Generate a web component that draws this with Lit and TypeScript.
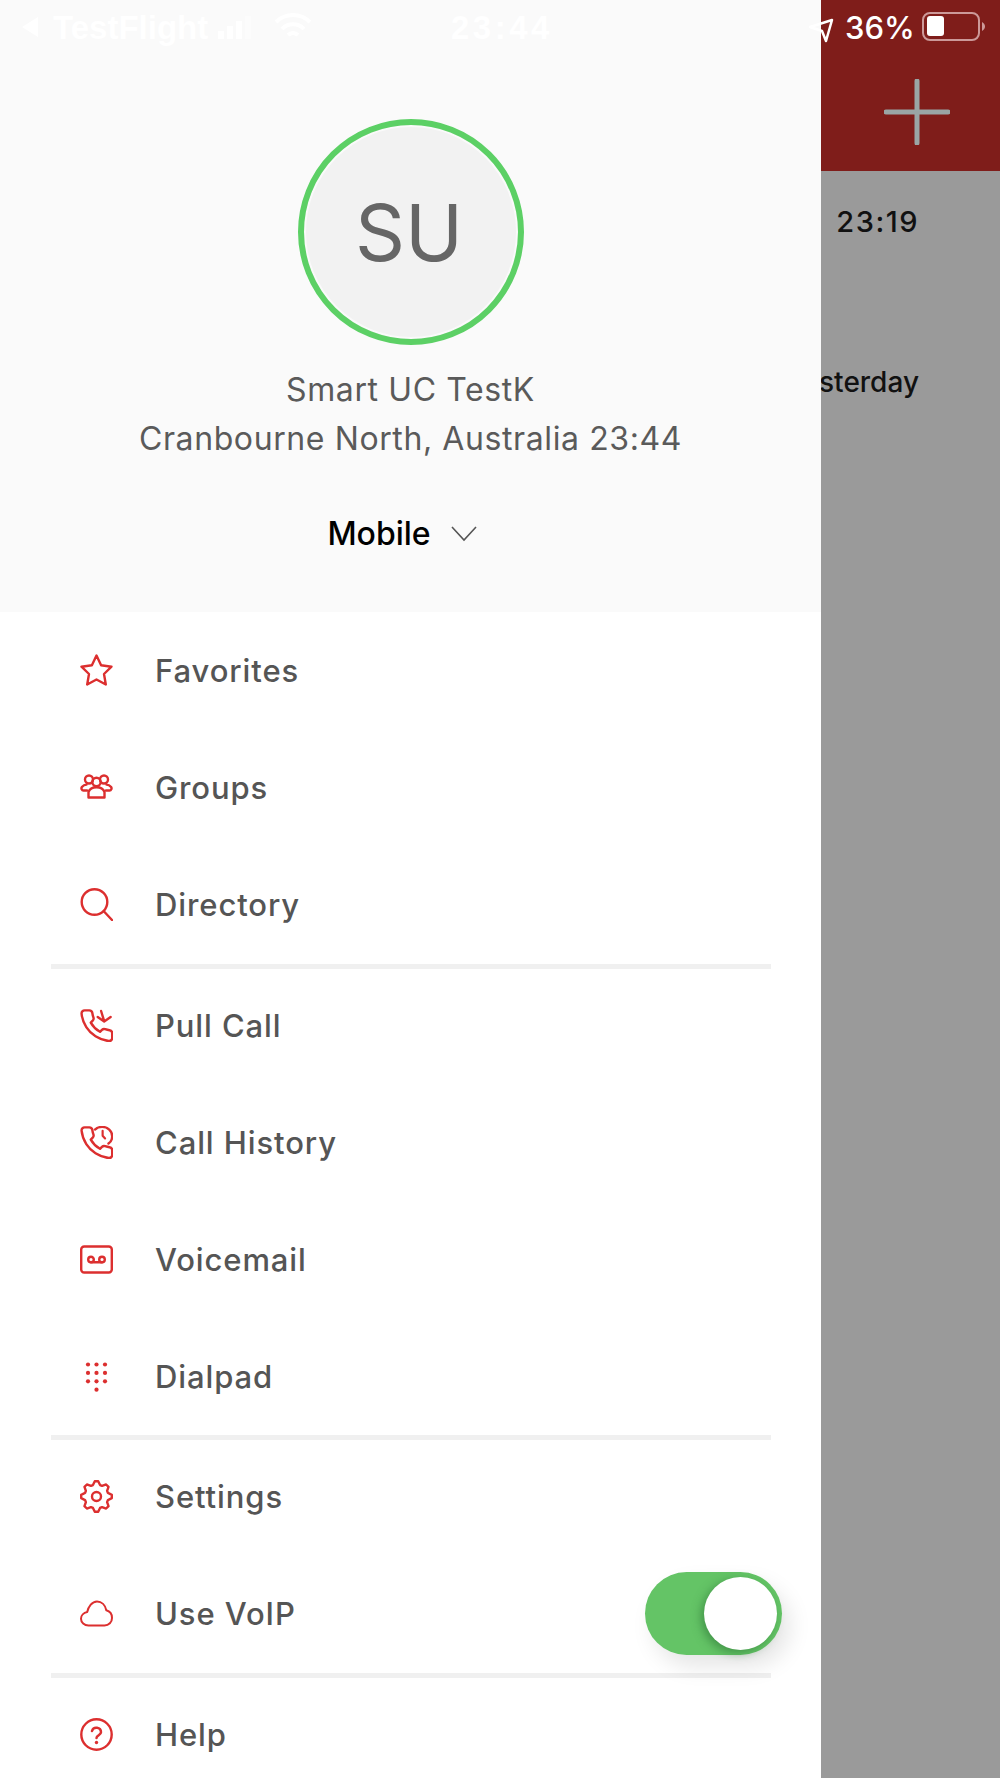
import { LitElement, html, css, svg } from "lit";
import { customElement } from "lit/decorators.js";

const PHONE = "M22 16.92v3a2 2 0 0 1-2.18 2 19.79 19.79 0 0 1-8.63-3.07 19.5 19.5 0 0 1-6-6 19.79 19.79 0 0 1-3.07-8.67A2 2 0 0 1 4.11 2h3a2 2 0 0 1 2 1.72 12.84 12.84 0 0 0 .7 2.81 2 2 0 0 1-.45 2.11L8.09 9.91a16 16 0 0 0 6 6l1.27-1.27a2 2 0 0 1 2.11-.45 12.84 12.84 0 0 0 2.81.7A2 2 0 0 1 22 16.92z";

function gearPath(): string {
  const pts: string[] = [];
  const cx = 16.5, cy = 16.5;
  for (let i = 0; i < 8; i++) {
    const a = (i * Math.PI) / 4 - Math.PI / 2;
    const seq: [number, number][] = [[-0.3, 12], [-0.11, 15.4], [0.11, 15.4], [0.3, 12]];
    for (const [d, r] of seq) {
      pts.push(`${(cx + r * Math.cos(a + d)).toFixed(2)} ${(cy + r * Math.sin(a + d)).toFixed(2)}`);
    }
  }
  return "M" + pts.join("L") + "Z";
}

const icons: Record<string, unknown> = {
  star: svg`<path d="M16.5 1.500l4.600 9.700 10.400 1.500-7.500 7.300 1.800 10.500-9.300-5-9.300 5 1.800-10.500-7.500-7.300 10.400-1.500z"/>`,
  groups: svg`<circle cx="9" cy="8.500" r="4"/><circle cx="24" cy="8.500" r="4"/><circle cx="16.500" cy="11" r="4.200"/>
    <path d="M7 19.500H3.500a2.200 2.200 0 0 1-1.600-3.500C3.200 14.400 5 13.600 6.500 13.600M26 19.500h3.500a2.200 2.200 0 0 0 1.600-3.500c-1.300-1.600-3.100-2.400-4.600-2.400"/>
    <path d="M8.500 26.500h16v-5.500c-1-3-4-4.800-8-4.800s-7 1.800-8 4.800z"/>`,
  search: svg`<circle cx="14.500" cy="14" r="12.800"/><path d="M23.800 23.200l8.200 8.800"/>`,
  pull: svg`<g transform="translate(-1.700 -1.700) scale(1.540)"><path stroke-width="1.560" d="${PHONE}"/><path stroke-width="1.560" d="M14.800 2.400l2 6.600M12.600 6.300l4.200 2.900 4.200-2.900"/></g>`,
  history: svg`<g transform="translate(-1.700 -1.700) scale(1.540)"><path stroke-width="1.560" d="${PHONE}"/><path stroke-width="1.560" d="M10.800 3.400C12 2.300 13.800 1.700 15.500 1.700c3.600 0 6.500 2.700 6.500 6 0 1.900-.9 3.700-2.400 4.800"/><path stroke-width="1.400" d="M15.800 4.200v3.200l1.600 1.800"/></g>`,
  voicemail: svg`<rect x="1.200" y="3.500" width="30.600" height="26" rx="3"/><circle cx="11" cy="16.500" r="2.800"/><circle cx="22" cy="16.500" r="2.800"/><path d="M11 19.300h11"/>`,
  dialpad: svg`<g fill="currentColor" stroke="none">
    ${[0, 1, 2].flatMap((r) => [8, 16.5, 25].map((x) => svg`<circle cx="${x}" cy="${4.500 + r * 8.400}" r="2.100"/>`))}
    <circle cx="16.500" cy="29.700" r="2.100"/></g>`,
  gear: svg`<path d="${gearPath()}"/><circle cx="16.500" cy="16.500" r="4.500"/>`,
  cloud: svg`<path stroke-width="2" d="M8.500 28.500C4.300 28.500 1 25.600 1 21.800c0-3.500 2.700-6.200 6.200-6.800C8.400 9.500 12.200 4.500 17 4.500c4.600 0 8.300 3.400 9.300 8.800 3.400.9 5.700 4 5.700 7.600 0 4.300-3.200 7.600-7.500 7.600z"/>`,
  help: svg`<circle cx="16.500" cy="16.500" r="15.200"/><path stroke-width="2.500" d="M12 13a4.600 4.600 0 0 1 9 1.300c0 2.900-4.500 3-4.500 5.700"/><circle cx="16.500" cy="24.500" r="1.700" fill="currentColor" stroke="none"/>`,
};

type Row = { icon: string; label: string; toggle?: boolean };
const groups: Row[][] = [
  [{ icon: "star", label: "Favorites" }, { icon: "groups", label: "Groups" }, { icon: "search", label: "Directory" }],
  [{ icon: "pull", label: "Pull Call" }, { icon: "history", label: "Call History" }, { icon: "voicemail", label: "Voicemail" }, { icon: "dialpad", label: "Dialpad" }],
  [{ icon: "gear", label: "Settings" }, { icon: "cloud", label: "Use VoIP", toggle: true }],
  [{ icon: "help", label: "Help" }],
];

@customElement("app-root")
export class AppRoot extends LitElement {
  static styles = css`
    :host {
      display: block;
      position: relative;
      width: 1000px;
      height: 1778px;
      overflow: hidden;
      background: #9a9a9a;
      font-family: Inter, "Liberation Sans", sans-serif;
    }
    .back-head {
      height: 171px;
      background: #7f1d1a;
      display: flex;
      justify-content: flex-end;
      align-items: flex-start;
      padding: 79px 50px 0 0;
      box-sizing: border-box;
    }
    .back-row {
      display: flex;
      justify-content: flex-end;
      padding-right: 81px;
      font-size: 29px;
      font-weight: 500;
      color: #111;
      line-height: 32px;
      letter-spacing: 1.500px;
    }
    .r1 { margin-top: 35px; }
    .r2 { margin-top: 128px; letter-spacing: 0; font-size: 28px; }
    .drawer {
      position: absolute;
      left: 0;
      top: 0;
      width: 821px;
      height: 1778px;
      background: #fff;
      overflow: hidden;
    }
    .profile {
      height: 612px;
      box-sizing: border-box;
      background: #fafafa;
      padding-top: 119px;
      display: flex;
      flex-direction: column;
      align-items: center;
    }
    .avatar {
      width: 226px;
      height: 226px;
      box-sizing: border-box;
      border: 6px solid #5cd065;
      border-radius: 50%;
      background: #f2f2f2;
      box-shadow: inset 0 0 0 2px #fafafa;
      display: flex;
      align-items: center;
      justify-content: center;
      font-size: 78px;
      color: #666;
      padding-right: 3px;
    }
    .name, .loc {
      font-size: 32px;
      line-height: 49px;
      color: #5a5a5a;
      letter-spacing: 0.6px;
    }
    .name { margin-top: 20px; }
    .mobile {
      margin-top: 46px;
      display: flex;
      align-items: center;
      gap: 19px;
      font-size: 32px;
      line-height: 50px;
      font-weight: 500;
      color: #000;
      margin-right: 16px;
    }
    .mobile svg { width: 28px; height: 18px; }
    .group { display: flex; flex-direction: column; }
    .group + .group::before {
      content: "";
      display: block;
      height: 5px;
      margin: 0.5px 50px -2px 51px;
      background: #f0f0f0;
    }
    .row {
      height: 117px;
      display: flex;
      align-items: center;
      padding-left: 80px;
      position: relative;
      box-sizing: border-box;
      flex: none;
    }
    .icon {
      width: 33px;
      height: 33px;
      flex: none;
      color: #dc2f2f;
      fill: none;
      stroke: currentColor;
      stroke-width: 2.400;
      stroke-linejoin: round;
      stroke-linecap: round;
    }
    .label {
      margin-left: 42px;
      font-size: 31px;
      font-weight: 500;
      color: #555;
      letter-spacing: 0.9px;
    }
    .toggle {
      position: absolute;
      left: 645px;
      top: 17px;
      width: 137px;
      height: 83px;
      border-radius: 42px;
      background: #64c466;
      box-shadow: 8px 12px 22px rgba(0, 0, 0, 0.10);
    }
    .thumb {
      position: absolute;
      right: 5px;
      top: 5px;
      width: 73px;
      height: 73px;
      border-radius: 50%;
      background: #fff;
      box-shadow: -3px 3px 10px rgba(40, 110, 50, 0.55);
    }
    .status {
      position: absolute;
      left: 0;
      top: 0;
      width: 1000px;
      height: 54px;
      color: #fff;
      font-size: 31px;
      font-weight: 500;
    }
    .st {
      position: absolute;
      line-height: 36px;
      top: 10px;
      white-space: nowrap;
    }
    .status svg { position: absolute; overflow: visible; }
    .faint {
      font-family: "Liberation Sans", sans-serif;
      font-size: 33px;
      font-weight: 700;
    }
    .time { letter-spacing: 3.500px; }
    .pct { left: 845px; }
    .plus { width: 66px; height: 66px; }
  `;

  private renderRow(r: Row) {
    return html`<div class="row">
      <svg class="icon" viewBox="0 0 33 33">${icons[r.icon]}</svg>
      <span class="label">${r.label}</span>
      ${r.toggle ? html`<div class="toggle"><div class="thumb"></div></div>` : ""}
    </div>`;
  }

  render() {
    return html`
      <div class="back-head">
        <svg class="plus" viewBox="0 0 66 66" fill="none" stroke="#9aa5a5" stroke-width="5" stroke-linecap="round">
          <path d="M33 2v62M2 33h62" />
        </svg>
      </div>
      <div class="back-row r1">23:19</div>
      <div class="back-row r2">Yesterday</div>

      <div class="drawer">
        <div class="profile">
          <div class="avatar">SU</div>
          <div class="name">Smart UC TestK</div>
          <div class="loc">Cranbourne North, Australia 23:44</div>
          <div class="mobile">
            <span>Mobile</span>
            <svg viewBox="0 0 28 18" fill="none" stroke="#555" stroke-width="1.600"><path d="M2 2l12 13L26 2" /></svg>
          </div>
        </div>
        ${groups.map((g) => html`<div class="group">${g.map((r) => this.renderRow(r))}</div>`)}
      </div>

      <div class="status">
        <svg style="left:20px;top:17px" width="20" height="20" viewBox="0 0 20 20"><path d="M18 0v20L2 10z" fill="#fff" /></svg>
        <span class="st faint" style="left:53px">TestFlight</span>
        <svg style="left:218px;top:16px" width="34" height="24" viewBox="0 0 34 24" fill="#fff">
          <rect x="0" y="15" width="6" height="8" /><rect x="9" y="10" width="6" height="13" /><rect x="18" y="5" width="6" height="18" /><rect x="27" y="0" width="6" height="23" opacity=".4" />
        </svg>
        <svg style="left:273px;top:12px" width="40" height="30" viewBox="0 0 40 30" fill="none" stroke="#fff" stroke-width="4">
          <path d="M3 10a24 24 0 0 1 34 0M9 17a15 15 0 0 1 22 0M15 23a7 7 0 0 1 10 0" />
        </svg>
        <span class="st faint time" style="left:451px">23:44</span>
        <svg style="left:808px;top:18px" width="26" height="24" viewBox="0 0 26 24" fill="none" stroke="#fff" stroke-width="2.500" stroke-linejoin="round">
          <path d="M2 9L24 2l-6 21-4-10z" />
        </svg>
        <span class="st pct">36%</span>
        <svg style="left:922px;top:12px" width="64" height="29" viewBox="0 0 64 29" fill="none">
          <rect x="1" y="1" width="56" height="27" rx="7" stroke="#c99" stroke-width="2" />
          <rect x="5" y="4" width="17" height="20" rx="3" fill="#fff" />
          <path d="M60 10c2 1 3 3 3 4.500s-1 3.500-3 4.500z" fill="#c99" />
        </svg>
      </div>
    `;
  }
}
